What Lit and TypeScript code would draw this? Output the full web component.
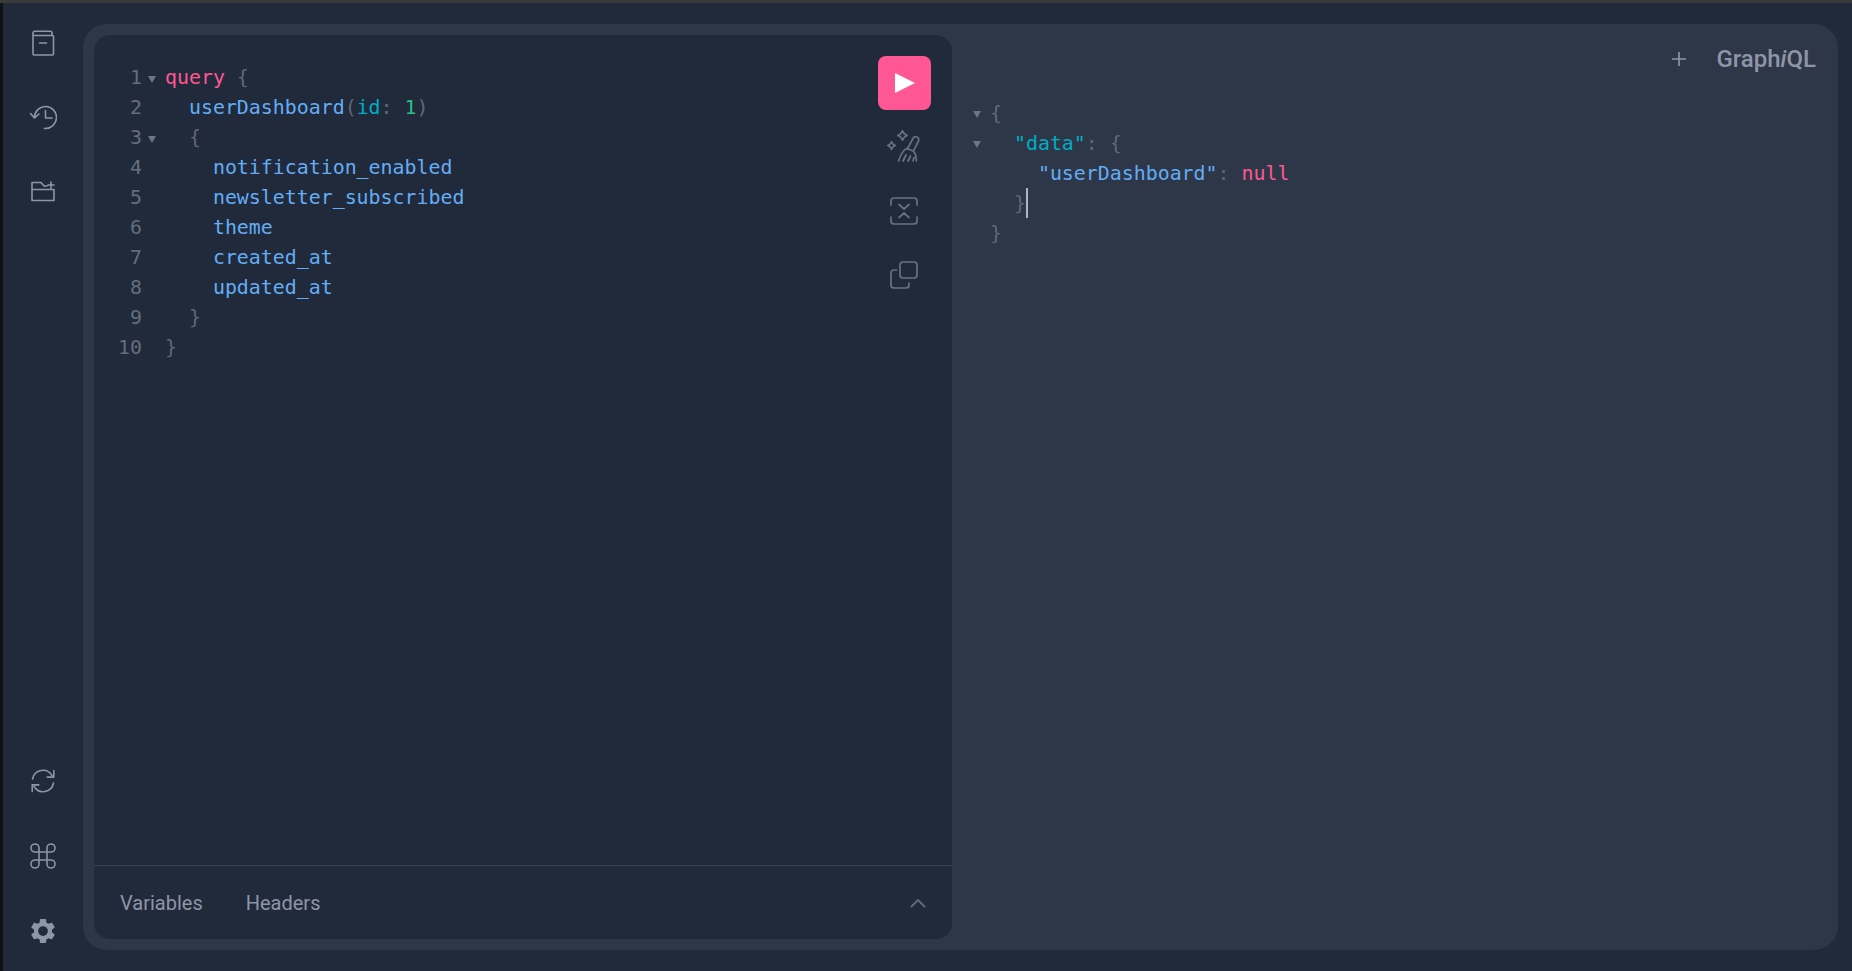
import { LitElement, html, css, svg } from "lit";
import { customElement } from "lit/decorators.js";

type Tok = [string, string];
const q: Tok[][] = [
  [["k", "query"], ["p", " {"]],
  [["f", "  userDashboard"], ["p", "("], ["a", "id"], ["p", ": "], ["n", "1"], ["p", ")"]],
  [["p", "  {"]],
  [["f", "    notification_enabled"]],
  [["f", "    newsletter_subscribed"]],
  [["f", "    theme"]],
  [["f", "    created_at"]],
  [["f", "    updated_at"]],
  [["p", "  }"]],
  [["p", "}"]],
];
const r: Tok[][] = [
  [["p", "{"]],
  [["a", '  "data"'], ["p", ": {"]],
  [["f", '    "userDashboard"'], ["p", ": "], ["k", "null"]],
  [["p", "  }"]],
  [["p", "}"]],
];
const tri = html`<svg class="tri" viewBox="0 0 8 7"><path d="M0 0h8L4 7z" /></svg>`;
const toks = (l: Tok[]) => l.map(([c, t]) => html`<span class=${c}>${t}</span>`);

const ic = (w: number, h: number, body: unknown) =>
  html`<svg class="ic" width=${w} height=${h} viewBox="0 0 ${w} ${h}">${body}</svg>`;

const docs = ic(24, 28, svg`<path d="M2 6.500V25a1 1 0 0 0 1 1h18.500a1 1 0 0 0 1-1V7.500a1 1 0 0 0-1-1H2zM2 6.500V4a1.800 1.800 0 0 1 1.800-1.800h15.400A1.800 1.800 0 0 1 21 4v2.500M8.500 14h7"/>`);
const hist = ic(28, 28, svg`<path d="M5.500 14a11 11 0 1 1 10 11.400M1.500 10.500l4 4.500 4.500-4M16.500 7.500V15h6.500"/>`);
const folder = ic(26, 22, svg`<path d="M2 9.500V2.500h9l3 3.500h3M2 9.500h22V20.500H2zM21 2v6M18 5h6"/>`);
const refresh = ic(26, 26, svg`<path d="M2.500 11A10.600 10.600 0 0 1 22 7.500M23.800 2.500v6.600h-6.600M23.500 15A10.600 10.600 0 0 1 4 18.500M2.200 23.500v-6.600h6.600"/>`);
const cmd = ic(26, 26, svg`<path d="M9 9V5A4 4 0 1 0 5 9H21A4 4 0 1 0 17 5V21A4 4 0 1 0 21 17H5A4 4 0 1 0 9 21z"/>`);
const gear = html`<svg class="fill" width="30" height="30" viewBox="0 0 24 24"><path fill-rule="evenodd" d="M19.140 12.940c.04-.3.06-.61.06-.94 0-.32-.02-.64-.07-.94l2.030-1.580a.49.49 0 0 0 .12-.61l-1.920-3.320a.488.488 0 0 0-.59-.22l-2.390.96c-.5-.38-1.030-.7-1.620-.94l-.36-2.540a.484.484 0 0 0-.48-.41h-3.840c-.24 0-.43.17-.47.41l-.36 2.540c-.59.24-1.130.57-1.620.94l-2.390-.96c-.22-.08-.47 0-.59.22L2.740 8.870c-.12.21-.08.47.12.61l2.030 1.580c-.05.3-.09.63-.09.94s.02.64.07.94l-2.030 1.580a.49.49 0 0 0-.12.61l1.920 3.320c.12.22.37.29.59.22l2.390-.96c.5.38 1.030.7 1.620.94l.36 2.540c.05.24.24.41.48.41h3.840c.24 0 .44-.17.47-.41l.36-2.540c.59-.24 1.130-.56 1.620-.94l2.390.96c.22.08.47 0 .59-.22l1.920-3.320c.12-.22.07-.47-.12-.61l-2.010-1.580zM12 15.900a3.900 3.900 0 1 1 0-7.800 3.900 3.900 0 0 1 0 7.800z"/></svg>`;

const prettify = ic(34, 34, svg`<path d="M15.500 .8c.8 2.600 2 3.900 4.700 4.700-2.700.8-3.900 2.100-4.700 4.700-.8-2.600-2-3.900-4.700-4.700 2.700-.8 3.900-2.100 4.700-4.700zM4.500 11.800c.7 2.100 1.600 3 3.700 3.700-2.100.7-3 1.600-3.700 3.700-.7-2.100-1.600-3-3.700-3.700 2.100-.7 3-1.600 3.700-3.700zM20.500 18.500l5.500-10a3 3 0 0 1 5.500 2.400l-5 10c2 2.800 3.200 6.100 2.800 10.100M20.500 18.500c-4.500.5-7 6.500-9 12.500M19.500 18.500l7 2.500M16 31l3-6M21 31l2.500-5M26 31l1-3.500"/>`);
const merge = ic(28, 28, svg`<path d="M1 8V4a3 3 0 0 1 3-3h20a3 3 0 0 1 3 3v4M1 20v4a3 3 0 0 0 3 3h20a3 3 0 0 0 3-3v-4M9 7.500l5 4.500 5-4.500M9 20.500l5-4.500 5 4.500"/>`);
const copy = ic(28, 28, svg`<rect x="10" y="1" width="17" height="16" rx="3"/><path d="M6.500 9H4a3 3 0 0 0-3 3v12a3 3 0 0 0 3 3h12a3 3 0 0 0 3-3v-2"/>`);

@customElement("app-root")
export class AppRoot extends LitElement {
  static styles = css`
    :host { display: block; height: 100vh; background: #212a3b; overflow: hidden; }
    .strip { height: 3px; background: #3a3a3a; }
    .shell { display: flex; height: calc(100vh - 3px); }
    .edge { width: 3px; background: #101114; }
    .side { width: 80px; flex: none; display: flex; flex-direction: column; justify-content: space-between; padding: 3px 0; box-sizing: border-box; }
    .btn { height: 74px; display: flex; align-items: center; justify-content: center; }
    .low .btn { height: 75px; }
    .ic { fill: none; stroke: #8d96a7; stroke-width: 1.6; stroke-linecap: round; stroke-linejoin: round; }
    .fill { fill: #8d96a7; }
    .session { flex: 1; margin: 21px 14px 21px 0; background: #2e3748; border-radius: 24px; display: flex; padding: 11px 0 11px 11px; box-sizing: border-box; min-width: 0; }
    .editor { width: 858px; flex: none; background: #212a3b; border-radius: 16px; display: flex; flex-direction: column; }
    .top { flex: 1; display: flex; min-height: 0; }
    .code { flex: 1; padding-top: 27px; }
    .line { display: grid; grid-template-columns: 48px 23px 1fr; height: 30px; line-height: 32px; }
    .code, .resp { font-family: "DejaVu Sans Mono", monospace; font-size: 19.9px; }
    .src { white-space: pre; }
    .no { text-align: right; color: #646d7c; }
    .fold { display: flex; align-items: center; padding: 2px 0 0 6px; }
    .tri { width: 8px; height: 7px; fill: #6d7583; }
    .k { color: #ff5794; }
    .f { color: #63adf5; }
    .a { color: #00adc6; }
    .n { color: #2bbd8b; }
    .p { color: #5f6878; }
    .tools { width: 74px; flex: none; padding-top: 21px; box-sizing: border-box; display: flex; flex-direction: column; align-items: flex-start; }
    .play { width: 53px; height: 54px; background: #ff5794; border-radius: 8px; display: flex; align-items: center; justify-content: center; margin-bottom: 5px; }
    .play svg { width: 20px; height: 20px; fill: #fff; margin-left: 1px; }
    .tool { width: 53px; height: 64px; display: flex; align-items: center; justify-content: center; margin-left: -1px; }
    .tool .ic { stroke: #687181; stroke-width: 1.7; }
    .tabs { height: 74px; box-sizing: border-box; border-top: 1px solid #3a4354; display: flex; align-items: center; padding: 0 26px; font-family: Roboto, sans-serif; font-size: 20px; color: #8d96a7; gap: 43px; }
    .chev { margin: 2px 0 0 auto; width: 16px; height: 9px; fill: none; stroke: #5f6878; stroke-width: 2; }
    .right { flex: 1; min-width: 0; display: flex; flex-direction: column; margin-top: -11px; }
    .head { height: 70px; flex: none; display: flex; align-items: center; justify-content: flex-end; padding-right: 22px; gap: 30px; }
    .plus { width: 14px; height: 14px; stroke: #8d96a7; stroke-width: 1.7; fill: none; }
    .logo { font-family: Roboto, sans-serif; font-weight: 500; font-size: 24px; color: #8d96a7; }
    .resp { padding: 4px 0 0 21px; }
    .rline { display: grid; grid-template-columns: 17px 1fr; height: 30px; line-height: 32px; }
    .rfold { display: flex; align-items: center; }
    .caret { display: inline-block; width: 2px; height: 30px; margin-left: 0; vertical-align: top; background: #a9b4c8; }
  `;

  render() {
    return html`
      <div class="strip"></div>
      <div class="shell">
        <div class="edge"></div>
        <nav class="side">
          <div>
            <div class="btn">${docs}</div>
            <div class="btn">${hist}</div>
            <div class="btn">${folder}</div>
          </div>
          <div class="low">
            <div class="btn">${refresh}</div>
            <div class="btn">${cmd}</div>
            <div class="btn">${gear}</div>
          </div>
        </nav>
        <main class="session">
          <section class="editor">
            <div class="top">
              <div class="code">
                ${q.map(
                  (l, i) => html`<div class="line">
                    <span class="no">${i + 1}</span>
                    <span class="fold">${i === 0 || i === 2 ? tri : ""}</span>
                    <span class="src">${toks(l)}</span>
                  </div>`
                )}
              </div>
              <div class="tools">
                <div class="play"><svg viewBox="0 0 20 20"><path d="M0 0l20 10L0 20z" /></svg></div>
                <div class="tool">${prettify}</div>
                <div class="tool">${merge}</div>
                <div class="tool">${copy}</div>
              </div>
            </div>
            <div class="tabs">
              <span>Variables</span>
              <span>Headers</span>
              <svg class="chev" viewBox="0 0 16 9"><path d="M1 8l7-7 7 7" /></svg>
            </div>
          </section>
          <section class="right">
            <header class="head">
              <svg class="plus" viewBox="0 0 14 14"><path d="M7 0v14M0 7h14" /></svg>
              <span class="logo">Graph<em>i</em>QL</span>
            </header>
            <div class="resp">
              ${r.map(
                (l, i) => html`<div class="rline">
                  <span class="rfold">${i < 2 ? tri : ""}</span>
                  <span class="src">${toks(l)}${i === 3 ? html`<span class="caret"></span>` : ""}</span>
                </div>`
              )}
            </div>
          </section>
        </main>
      </div>
    `;
  }
}
